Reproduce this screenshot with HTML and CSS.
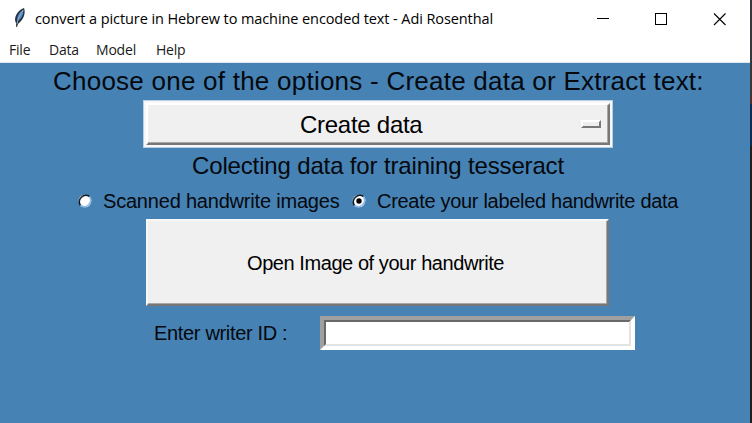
FILE: index.html
```html
<!DOCTYPE html>
<html lang="en">
<head>
<meta charset="utf-8">
<title>convert a picture in Hebrew to machine encoded text - Adi Rosenthal</title>
<link rel="stylesheet" href="styles.css">
</head>
<body>
<div class="screen">
  <div class="window">
    <header class="titlebar">
      <svg class="feather" width="16" height="22" viewBox="0 0 16 22">
        <path d="M4.200 20 L4 16 C1.500 12 4 4 12 1 C14 6 11.500 13 6 17 L5 20Z" fill="#273545"/>
        <path d="M5.500 14 C4.500 10 7 5 11 3 C12 7 9.500 12 5.500 14Z" fill="#4d86c2"/>
        <path d="M5 17 C5.500 12 8 8 11.500 3" fill="none" stroke="#a9bfd6" stroke-width=".8"/>
      </svg>
      <span class="title">convert a picture in Hebrew to machine encoded text - Adi Rosenthal</span>
      <svg class="controls" width="138" height="37" viewBox="0 0 138 37" fill="none" stroke="#000" shape-rendering="crispEdges">
        <path d="M0 18.5H12"/>
        <rect x="58.5" y="13.5" width="11" height="11"/>
        <path d="M117 13.5L128.500 25M128.500 13.500L117 25" shape-rendering="auto" stroke-width="1.1"/>
      </svg>
    </header>
    <nav class="menu"><span class="m-file">File</span><span class="m-data">Data</span><span class="m-model">Model</span><span class="m-help">Help</span></nav>
    <main class="content">
      <div class="heading"><span>Choose one of the options - Create data or Extract text:</span></div>
      <div class="option"><div class="option-face"><span class="option-text">Create data</span><i class="indicator"></i></div></div>
      <div class="subheading"><span>Colecting data for training tesseract</span></div>
      <div class="radios">
        <svg class="radio" width="16" height="16" viewBox="0 0 16 16"><circle cx="8" cy="8" r="6.300" fill="#fff"/><path d="M3.500 12.500A6.500 6.500 0 0 1 12.500 3.500" fill="none" stroke="#111c26" stroke-width="1.500"/><path d="M12.500 3.500A6.500 6.500 0 0 1 3.500 12.500" fill="none" stroke="#8db7e8" stroke-width="1.500"/></svg>
        <span class="radio-a">Scanned handwrite images</span>
        <svg class="radio" width="16" height="16" viewBox="0 0 16 16"><circle cx="8" cy="8" r="6.300" fill="#fff"/><path d="M3.500 12.500A6.500 6.500 0 0 1 12.500 3.500" fill="none" stroke="#111c26" stroke-width="1.500"/><path d="M12.500 3.500A6.500 6.500 0 0 1 3.500 12.500" fill="none" stroke="#8db7e8" stroke-width="1.500"/><circle cx="8" cy="8" r="2.700" fill="#000"/></svg>
        <span class="radio-b">Create your labeled handwrite data</span>
      </div>
      <div class="open"><span>Open Image of your handwrite</span></div>
      <div class="entry-row"><span class="entry-label">Enter writer ID :</span><div class="entry"><div class="entry-in"></div></div></div>
    </main>
  </div>
  <div class="desktop"></div>
</div>
</body>
</html>
```

FILE: styles.css
```css
body { margin: 0; }
.screen { display: flex; width: 752px; height: 423px; overflow: hidden; background: #4682b4; }
.window { width: 750px; display: flex; flex-direction: column; }
.desktop { width: 2px; background: linear-gradient(#34373b 0 95px, #4b2f28 95px 104px, #102c50 104px 146px, #201f1d 146px); }
.titlebar { height: 37px; background: #fff; display: flex; align-items: center; }
.feather { margin-left: 12px; margin-top: -2px; flex: none; }
.title { width: 562px; margin-left: 7px; font: 14.5px/37px "Open Sans", sans-serif; letter-spacing: -.09px; white-space: nowrap; color: #000; }
.controls { flex: none; }
.menu { height: 25px; background: #fff; border-bottom: 1px solid #dfe6ed; display: flex; font: 14px/26px "Open Sans", sans-serif; letter-spacing: -.2px; color: #1a1a1a; padding-left: 9px; }
.m-file { width: 40px; }
.m-data { width: 47px; }
.m-model { width: 60px; }
.content { flex: 1; display: flex; flex-direction: column; font-family: "Liberation Sans", sans-serif; color: #05080d; white-space: nowrap; }
.heading { height: 37px; padding-left: 53px; font-size: 26px; line-height: 37px; letter-spacing: .24px; }
.option { box-sizing: border-box; width: 470px; height: 48px; margin-left: 143px; border: 1px solid #b9cfe2; background: #f7f7f7; padding: 2px; }
.option-face { box-sizing: border-box; height: 42px; border: 2px solid; border-color: #fff #777 #777 #fff; background: #f0f0f0; box-shadow: inset -1px -1px #a8a8a8; display: flex; align-items: center; padding-left: 152px; }
.option-text { width: 281px; font-size: 24px; line-height: 30px; padding-top: 2px; letter-spacing: -.27px; color: #000; }
.indicator { width: 16px; height: 4px; border: 2px solid; border-color: #fff #777 #777 #fff; background: #eee; }
.subheading { height: 35px; padding-left: 192px; font-size: 24px; line-height: 36px; letter-spacing: -.15px; }
.radios { height: 36px; display: flex; align-items: center; padding-left: 77px; font-size: 20px; }
.radio { flex: none; }
.radio-a { width: 248px; margin-left: 10px; letter-spacing: -.2px; }
.radio-b { margin-left: 10px; letter-spacing: -.3px; }
.open { box-sizing: border-box; width: 463px; height: 87px; margin-left: 146px; border: 2px solid; border-color: #f8f8f8 #777 #777 #f8f8f8; box-shadow: inset -1px -1px #a8a8a8; background: #f0f0f0; padding-left: 99px; font-size: 20px; line-height: 85px; letter-spacing: -.43px; color: #000; }
.entry-row { height: 34px; margin-top: 10px; display: flex; padding-left: 154px; font-size: 20px; line-height: 35px; letter-spacing: -.33px; }
.entry-label { width: 166px; }
.entry { box-sizing: border-box; width: 315px; height: 34px; border: 4px solid; border-color: #a0a0a0 #fff #fff #a0a0a0; }
.entry-in { box-sizing: border-box; height: 26px; border: 2px solid; border-color: #696969 #e3e3e3 #e3e3e3 #696969; background: #fff; }
```
